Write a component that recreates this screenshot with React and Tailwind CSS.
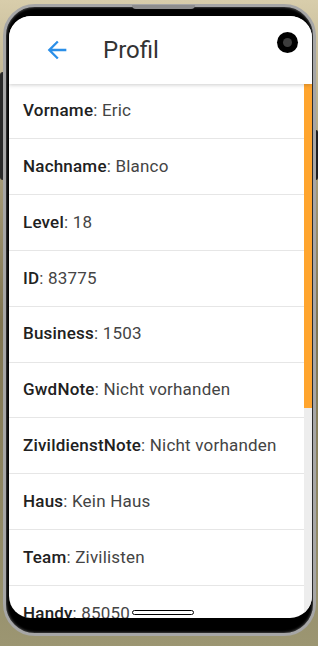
import React from 'react';

const rows = [
  ['Vorname', 'Eric'],
  ['Nachname', 'Blanco'],
  ['Level', '18'],
  ['ID', '83775'],
  ['Business', '1503'],
  ['GwdNote', 'Nicht vorhanden'],
  ['ZivildienstNote', 'Nicht vorhanden'],
  ['Haus', 'Kein Haus'],
  ['Team', 'Zivilisten'],
  ['Handy', '85050'],
];

function BackArrow() {
  return (
    <svg width="28" height="28" viewBox="0 0 24 24" fill="#2b8fe8">
      <path d="M20 11H7.83l5.59-5.59L12 4l-8 8 8 8 1.41-1.41L7.83 13H20v-2z" />
    </svg>
  );
}

export default function App() {
  return (
    <div className="relative w-[318px] h-[646px] overflow-hidden bg-gradient-to-b from-[#d8cdab] via-[#7f7450] to-[#9c9672] pt-[4px] pl-[3px] pr-[2px] font-['Roboto','Noto_Sans',sans-serif]">
      {/* side buttons */}
      <div className="absolute left-[0px] top-[72px] w-[3px] h-[108px] rounded-l bg-[#2a2a2a]" />
      <div className="absolute right-[0px] top-[130px] w-[2px] h-[50px] rounded-r bg-[#1e1e1e]" />

      <div className="relative h-[632px] rounded-[32px] border-[3px] border-[#a6a6a6] bg-black pt-[9px] pl-[3px] pr-[1px] pb-[15px] shadow-[inset_0_0_3px_#777]">
        <div className="absolute left-[126px] top-[-2px] w-[63px] h-[4px] rounded-b-md bg-[#8e8e8e]" />

        <div className="relative h-full rounded-[22px] bg-white overflow-hidden flex flex-col">
          {/* app bar */}
          <div className="relative z-10 h-[67.5px] shrink-0 flex items-center bg-white shadow-[0_1px_4px_rgba(0,0,0,0.2)]">
            <div className="ml-[34px]">
              <BackArrow />
            </div>
            <span className="ml-[32px] text-[24px] text-[#333]">Profil</span>
            <div className="absolute left-[268px] top-[16px] w-[21px] h-[21px] rounded-full bg-black flex items-center justify-center">
              <div className="w-[9px] h-[9px] rounded-full bg-[#3c3c3c]" />
            </div>
          </div>

          {/* list */}
          <div className="flex flex-1 overflow-hidden">
            <div className="flex-1">
              {rows.map(([label, value]) => (
                <div
                  key={label}
                  className="h-[55.83px] border-b border-[#e6e6e6] flex items-center pl-[14px] text-[17px] tracking-[0.2px] whitespace-nowrap"
                >
                  <span className="font-medium text-[#212121]">{label}</span>
                  <span className="text-[#444]">: {value}</span>
                </div>
              ))}
            </div>
            <div className="w-[8px] bg-[#ededed]">
              <div className="h-[324px] bg-[#ffa52e]" />
            </div>
          </div>

          <div className="absolute left-[123px] bottom-[3px] w-[62px] h-[5px] rounded-full bg-white border border-black" />
        </div>
      </div>
    </div>
  );
}
